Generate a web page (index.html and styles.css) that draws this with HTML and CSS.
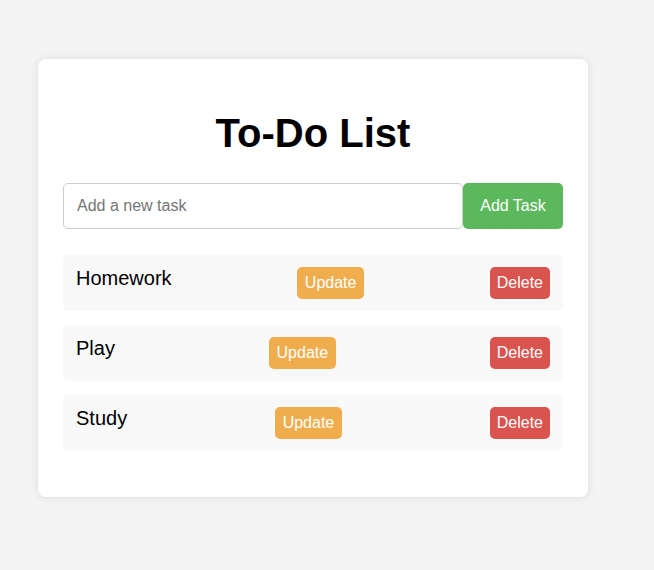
FILE: index.html
```html
<!DOCTYPE html>
<html lang="en">
<head>
<meta charset="utf-8">
<title>To-Do List</title>
<link rel="stylesheet" href="styles.css">
</head>
<body>
<div class="card">
  <h1 class="title">To-Do List</h1>
  <div class="add-row">
    <input class="task-input" type="text" placeholder="Add a new task">
    <button class="btn btn-add">Add Task</button>
  </div>
  <ul class="task-list">
    <li class="task">
      <span class="task-text">Homework</span>
      <button class="btn btn-small btn-update">Update</button>
      <button class="btn btn-small btn-delete">Delete</button>
    </li>
    <li class="task">
      <span class="task-text">Play</span>
      <button class="btn btn-small btn-update">Update</button>
      <button class="btn btn-small btn-delete">Delete</button>
    </li>
    <li class="task">
      <span class="task-text">Study</span>
      <button class="btn btn-small btn-update">Update</button>
      <button class="btn btn-small btn-delete">Delete</button>
    </li>
  </ul>
</div>
</body>
</html>
```
FILE: styles.css
```css
html, body {
  margin: 0;
  padding: 0;
}
body {
  background: #f4f4f4;
  font-family: "Liberation Sans", Arial, sans-serif;
  padding: 59px 0 0 38px;
  min-height: 570px;
  box-sizing: border-box;
}
.card {
  width: 550px;
  box-sizing: border-box;
  background: #fff;
  border-radius: 8px;
  padding: 25px 25px 25px;
  box-shadow: 0 0 10px rgba(0, 0, 0, 0.1);
}
.title {
  font-size: 40px;
  font-weight: bold;
  text-align: center;
  margin: 0.67em 0;
  color: #000;
}
.add-row {
  display: flex;
}
.task-input {
  flex: 1;
  font-family: inherit;
  font-size: 16px;
  line-height: 20px;
  padding: 12px 13px;
  border: 1px solid #ccc;
  border-radius: 5px;
  outline: none;
  margin: 0;
}
.task-input::placeholder {
  color: #757575;
}
.btn {
  font-family: inherit;
  font-size: 16px;
  border: none;
  color: #fff;
  cursor: pointer;
  margin: 0;
}
.btn-add {
  width: 100px;
  background: #5cb85c;
  border-radius: 5px;
  padding: 0;
}
.task-list {
  list-style: none;
  margin: 26px 0 21px;
  padding: 0;
  display: flex;
  flex-direction: column;
  gap: 14px;
}
.task {
  display: flex;
  justify-content: space-between;
  align-items: flex-start;
  background: #f9f9f9;
  border-radius: 5px;
  padding: 12px 13px;
}
.task-text {
  font-size: 20px;
  line-height: 23px;
  color: #000;
}
.btn-small {
  line-height: 18px;
  padding: 7px 7px;
  border-radius: 5px;
}
.btn-update {
  background: #f0ad4e;
  padding: 7px 8px;
}
.btn-delete {
  background: #d9534f;
}
```
